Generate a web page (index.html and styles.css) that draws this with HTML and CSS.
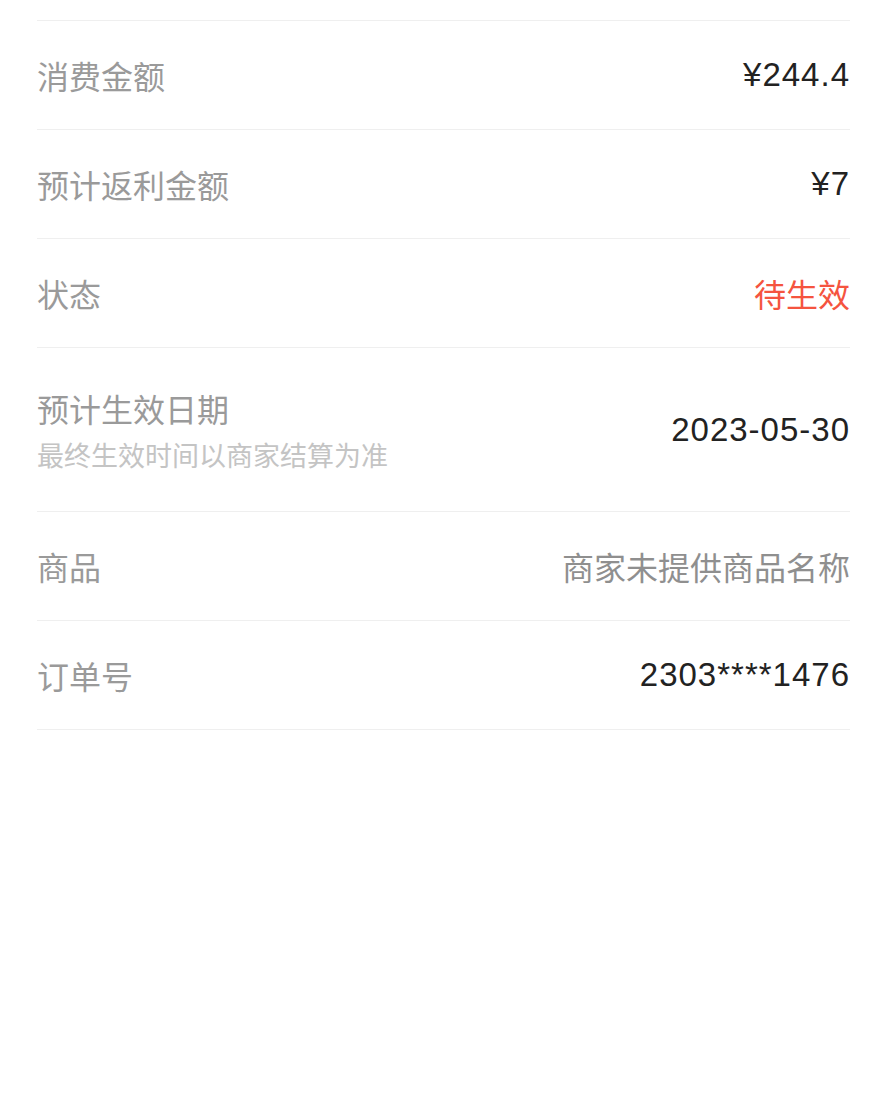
FILE: index.html
```html
<!DOCTYPE html>
<html lang="zh-CN">
<head>
  <meta charset="UTF-8">
  <title>订单详情</title>
  <meta name="viewport" content="width=device-width, initial-scale=1">
  <link rel="stylesheet" href="styles.css">
</head>
<body>

  <div class="list">
    <div class="top"></div>

    <div class="row">
      <span class="label">消费金额</span>
      <span class="value">¥244.4</span>
    </div>

    <div class="row">
      <span class="label">预计返利金额</span>
      <span class="value">¥7</span>
    </div>

    <div class="row">
      <span class="label">状态</span>
      <span class="value red">待生效</span>
    </div>

    <div class="row tall">
      <div>
        <div class="label">预计生效日期</div>
        <div class="note">最终生效时间以商家结算为准</div>
      </div>
      <span class="value">2023-05-30</span>
    </div>

    <div class="row">
      <span class="label">商品</span>
      <span class="value grey">商家未提供商品名称</span>
    </div>

    <div class="row">
      <span class="label">订单号</span>
      <span class="value">2303****1476</span>
    </div>
  </div>

</body>
</html>
```

FILE: styles.css
```css
* { box-sizing: border-box; }
body { margin: 0; background: #fff; font-family: "Liberation Sans", "Noto Sans CJK SC", sans-serif; }
.list { padding: 0 37px; }
.top { height: 21px; border-bottom: 1px solid #efefef; }
.row { display: flex; align-items: center; justify-content: space-between; height: 109px; border-bottom: 1px solid #efefef; }
.row.tall { height: 164px; }
.label { font-size: 32px; color: #9a9a9a; }
.value { font-size: 33px; letter-spacing: 1px; color: #222; }
.value.red { font-size: 32px; letter-spacing: 0; color: #f5543f; }
.value.grey { font-size: 32px; letter-spacing: 0; color: #8f8f8f; }
.note { font-size: 27px; color: #c4c4c4; margin-top: 4px; }
```
